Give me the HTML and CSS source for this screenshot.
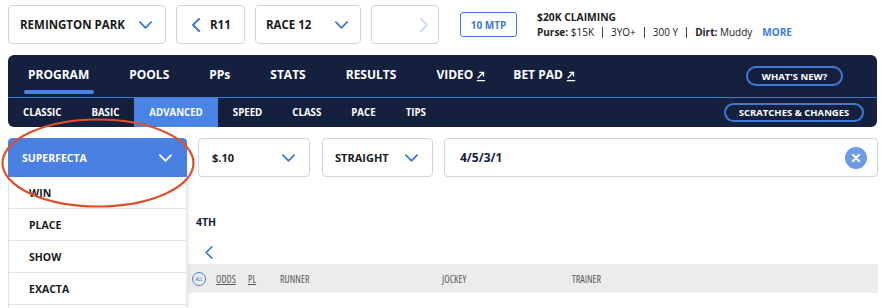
FILE: index.html
```html
<!DOCTYPE html>
<html lang="en">
<head>
<meta charset="utf-8">
<title>Program</title>
<link rel="stylesheet" href="styles.css">
</head>
<body>
<div class="page">
  <header class="race-bar">
    <div class="sel sel-track"><span>REMINGTON PARK</span><svg class="chev" viewBox="0 0 14 8"><path d="M1 1l6 6 6-6"/></svg></div>
    <div class="sel sel-prev"><svg class="chev-side" viewBox="0 0 8 14"><path d="M7 1L1 7l6 6"/></svg><span>R11</span></div>
    <div class="sel sel-race"><span>RACE 12</span><svg class="chev" viewBox="0 0 14 8"><path d="M1 1l6 6 6-6"/></svg></div>
    <div class="sel sel-next"><svg class="chev-side light" viewBox="0 0 8 14"><path d="M1 1l6 6-6 6"/></svg></div>
    <div class="mtp">10 MTP</div>
    <div class="race-info">
      <div class="race-title">$20K CLAIMING</div>
      <div class="race-meta"><b>Purse:</b> $15K<span class="pipe"></span>3YO+<span class="pipe"></span>300 Y<span class="pipe"></span><b>Dirt:</b> Muddy<a class="more">MORE</a></div>
    </div>
  </header>

  <nav class="nav">
    <div class="nav-main">
      <a class="nav-item active">PROGRAM</a>
      <a class="nav-item">POOLS</a>
      <a class="nav-item">PPs</a>
      <a class="nav-item">STATS</a>
      <a class="nav-item">RESULTS</a>
      <a class="nav-item has-ext">VIDEO<svg class="ext" viewBox="0 0 12 12"><path d="M2 8L9 1M4 1h5v5M1 11h10"/></svg></a>
      <a class="nav-item has-ext">BET PAD<svg class="ext" viewBox="0 0 12 12"><path d="M2 8L9 1M4 1h5v5M1 11h10"/></svg></a>
      <span class="pill pill-new">WHAT'S NEW?</span>
    </div>
    <div class="nav-sub">
      <a class="sub-item">CLASSIC</a>
      <a class="sub-item">BASIC</a>
      <a class="sub-item active">ADVANCED</a>
      <a class="sub-item">SPEED</a>
      <a class="sub-item">CLASS</a>
      <a class="sub-item">PACE</a>
      <a class="sub-item">TIPS</a>
      <span class="pill pill-scr">SCRATCHES &amp; CHANGES</span>
    </div>
  </nav>

  <section class="bet-row">
    <div class="bet-type">
      <div class="sel sel-bet"><span>SUPERFECTA</span><svg class="chev white" viewBox="0 0 14 8"><path d="M1 1l6 6 6-6"/></svg></div>
      <ul class="dropdown">
        <li>WIN</li>
        <li>PLACE</li>
        <li>SHOW</li>
        <li>EXACTA</li>
        <li></li>
      </ul>
    </div>
    <div class="sel sel-amt"><span>$.10</span><svg class="chev" viewBox="0 0 14 8"><path d="M1 1l6 6 6-6"/></svg></div>
    <div class="sel sel-mod"><span>STRAIGHT</span><svg class="chev" viewBox="0 0 14 8"><path d="M1 1l6 6 6-6"/></svg></div>
    <div class="sel sel-input"><span>4/5/3/1</span><span class="clear"><svg viewBox="0 0 10 10"><path d="M2 2l6 6M8 2l-6 6"/></svg></span></div>
  </section>

  <section class="results">
    <div class="finish">4TH</div>
    <svg class="back" viewBox="0 0 8 14"><path d="M7 1L1 7l6 6"/></svg>
    <div class="table-head">
      <span class="all">ALL</span>
      <span class="col col-odds"><u>ODDS</u></span>
      <span class="col col-pl"><u>PL</u></span>
      <span class="col col-runner">RUNNER</span>
      <span class="col col-jockey">JOCKEY</span>
      <span class="col col-trainer">TRAINER</span>
    </div>
  </section>

  <svg class="annot" viewBox="0 0 196 92"><ellipse cx="98" cy="46" rx="95.5" ry="43.5"/></svg>
</div>
</body>
</html>
```

FILE: styles.css
```css
* { box-sizing: border-box; }
html, body { margin: 0; padding: 0; background: #fff; }
body {
  font-family: "Open Sans", "Noto Sans", "Liberation Sans", sans-serif;
  color: #1c1c1c;
  width: 881px;
  height: 308px;
  overflow: hidden;
}
.page {
  position: relative;
  padding: 5px 3px 0 8px;
}
a { text-decoration: none; color: inherit; }

/* top race bar */
.race-bar {
  display: flex;
  align-items: center;
  height: 39px;
}
.sel {
  display: flex;
  align-items: center;
  height: 39px;
  border: 1px solid #d4d4d4;
  border-radius: 4px;
  background: #fff;
  font-weight: 700;
  font-size: 11.5px;
  color: #1a1a1a;
}
.chev {
  width: 13px;
  height: 8px;
  fill: none;
  stroke: #3f7ad6;
  stroke-width: 2;
  stroke-linecap: round;
  stroke-linejoin: round;
}
.chev.white { stroke: #fff; }
.chev-side {
  width: 8px;
  height: 14px;
  fill: none;
  stroke: #3f7ad6;
  stroke-width: 2;
  stroke-linecap: round;
  stroke-linejoin: round;
}
.chev-side.light { stroke: #cfdcf3; }
.sel-track { width: 158px; padding: 0 13px 0 11px; justify-content: space-between; }
.sel-prev { width: 69px; margin-left: 10px; padding-left: 15px; gap: 10px; }
.sel-race { width: 106px; margin-left: 10px; padding: 0 12px 0 10px; justify-content: space-between; }
.sel-next { width: 68px; margin-left: 10px; justify-content: flex-end; padding-right: 10px; }
.mtp {
  margin-left: 21px;
  width: 57px;
  height: 25px;
  border: 1px solid #3f7ad6;
  border-radius: 3px;
  color: #3f7ad6;
  font-size: 10px;
  font-weight: 700;
  display: flex;
  align-items: center;
  justify-content: center;
}
.race-info {
  margin-left: 20px;
  font-size: 10px;
  line-height: 15px;
  color: #222;
}
.race-title { font-weight: 700; font-size: 10.3px; }
.race-meta { display: flex; align-items: center; white-space: pre; }
.race-meta b { font-weight: 700; }
.pipe {
  display: inline-block;
  width: 1px;
  height: 11px;
  background: #444;
  margin: 0 8px;
}
.more { color: #3f7ad6; font-weight: 700; margin-left: 10px; }

/* nav */
.nav {
  margin-top: 11px;
  width: 869px;
  background: #14203d;
  border-radius: 6px;
  overflow: hidden;
}
.nav-main {
  display: flex;
  align-items: center;
  height: 43px;
  padding-left: 20px;
  gap: 40px;
  border-bottom: 1px solid #3f7ad6;
}
.nav-item {
  position: relative;
  display: flex;
  align-items: flex-end;
  gap: 3px;
  color: #fff;
  font-size: 12px;
  font-weight: 700;
  line-height: 16px;
  margin-top: -2px;
}
.nav-item.has-ext + .nav-item { margin-left: -13px; }
.nav-item.active::after {
  content: "";
  position: absolute;
  left: -4px;
  right: -5px;
  bottom: -11px;
  height: 4px;
  border-radius: 2px;
  background: #4a84e4;
}
.ext {
  width: 10px;
  height: 11px;
  margin-bottom: 1px;
  fill: none;
  stroke: #fff;
  stroke-width: 1.6;
}
.pill {
  border: 2px solid #3f7ad6;
  border-radius: 11px;
  color: #fff;
  font-size: 9.5px;
  font-weight: 700;
  display: flex;
  align-items: center;
  justify-content: center;
}
.pill-new { margin-left: auto; margin-right: 34px; width: 97px; height: 20px; }
.nav-sub {
  display: flex;
  align-items: stretch;
  height: 29px;
}
.sub-item {
  display: flex;
  align-items: center;
  padding: 0 15px;
  color: #fff;
  font-size: 9.7px;
  font-weight: 700;
}
.sub-item.active { background: #4a84e4; }
.pill-scr { margin: auto 13px auto auto; width: 140px; height: 19px; }

/* bet row */
.bet-row {
  display: flex;
  margin-top: 11px;
  height: 39px;
}
.bet-type { position: relative; width: 179px; }
.sel-bet {
  width: 179px;
  background: #4a80e2;
  border-color: #4a80e2;
  border-radius: 4px 4px 0 0;
  color: #fff;
  padding: 0 14px 0 13px;
  justify-content: space-between;
  font-size: 10.5px;
}
.dropdown {
  position: absolute;
  left: 0;
  top: 39px;
  width: 179px;
  margin: 0;
  padding: 0;
  list-style: none;
  background: #fff;
  border-left: 1px solid #e3e3e3;
  border-right: 1px solid #e3e3e3;
  box-shadow: 2px 0 3px rgba(0,0,0,0.08);
  z-index: 2;
}
.dropdown li {
  height: 32px;
  border-bottom: 1px solid #e3e3e3;
  padding-left: 20px;
  display: flex;
  align-items: center;
  font-size: 10.5px;
  font-weight: 700;
  color: #1a1a1a;
}
.sel-amt { width: 112px; margin-left: 11px; padding: 0 14px 0 13px; justify-content: space-between; font-size: 11px; }
.sel-mod { width: 111px; margin-left: 12px; padding: 0 14px 0 12px; justify-content: space-between; font-size: 11px; }
.sel-input {
  width: 434px;
  margin-left: 11px;
  padding: 0 10px 0 15px;
  justify-content: space-between;
  color: #14203d;
  font-size: 12px;
}
.clear {
  width: 22px;
  height: 22px;
  border-radius: 50%;
  background: #6e9ae8;
  display: flex;
  align-items: center;
  justify-content: center;
}
.clear svg {
  width: 10px;
  height: 10px;
  fill: none;
  stroke: #fff;
  stroke-width: 2.4;
  stroke-linecap: round;
}

/* results */
.results {
  margin-left: 180px;
  padding-top: 38px;
}
.finish {
  padding-left: 8px;
  font-size: 10.5px;
  font-weight: 700;
  color: #14203d;
  line-height: 15px;
}
.back {
  display: block;
  margin: 16px 0 5px 17px;
  width: 8px;
  height: 13px;
  fill: none;
  stroke: #3f7ad6;
  stroke-width: 1.8;
  stroke-linecap: round;
  stroke-linejoin: round;
}
.table-head {
  position: relative;
  width: 690px;
  height: 29px;
  background: #ececec;
  display: flex;
  align-items: center;
  font-size: 10px;
  font-stretch: 75%;
  font-weight: 400;
  color: #5a5a5a;
}
.all {
  margin-left: 4px;
  width: 14px;
  height: 14px;
  border: 1px solid #4a7fdc;
  border-radius: 50%;
  color: #4a7fdc;
  font-size: 6px;
  display: flex;
  align-items: center;
  justify-content: center;
}
.col { white-space: nowrap; }
.col-odds { margin-left: 10px; width: 32px; }
.col-pl { width: 32px; }
.col-runner { width: 162px; }
.col-jockey { width: 130px; }
.col-trainer { width: 80px; }

/* annotation ellipse drawn over the dropdown */
.annot {
  position: absolute;
  left: 0;
  top: 117px;
  width: 196px;
  height: 92px;
  fill: none;
  stroke: #de4f2c;
  stroke-width: 2.2;
  z-index: 3;
  pointer-events: none;
}
```
